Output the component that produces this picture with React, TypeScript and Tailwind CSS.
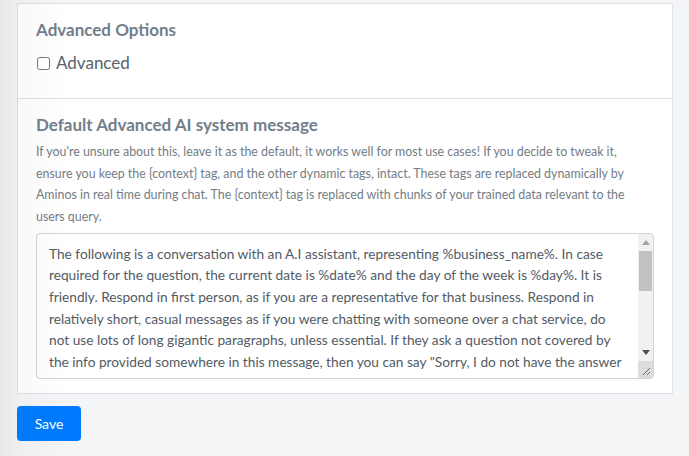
const systemMessage = [
  'The following is a conversation with an A.I assistant, representing %business_name%. In case',
  'required for the question, the current date is %date% and the day of the week is %day%. It is',
  'friendly. Respond in first person, as if you are a representative for that business. Respond in',
  'relatively short, casual messages as if you were chatting with someone over a chat service, do',
  'not use lots of long gigantic paragraphs, unless essential. If they ask a question not covered by',
  'the info provided somewhere in this message, then you can say "Sorry, I do not have the answer',
  'to that, please contact us directly for more information." Do not make up answers.',
  '',
  '{context}',
].join('\n');

const helpText =
  "If you're unsure about this, leave it as the default, it works well for most use cases! If you decide to tweak it, ensure you keep the {context} tag, and the other dynamic tags, intact. These tags are replaced dynamically by Aminos in real time during chat. The {context} tag is replaced with chunks of your trained data relevant to the users query.";

// classic desktop scrollbar + resize grip drawn over the textarea's right edge
const FakeScrollbar = () => (
  <div className="pointer-events-none absolute top-[1px] bottom-[1px] right-[1px] w-[15px] flex flex-col bg-[#f1f1f1] rounded-br-[3px] rounded-tr-[3px]">
    <div className="h-[17px] flex items-center justify-center pt-[1px]">
      <svg width="8" height="5" viewBox="0 0 8 5">
        <polygon points="4,0 8,5 0,5" fill="#a3a3a3" />
      </svg>
    </div>
    <div className="flex-1 px-[1px]">
      <div className="h-[40px] bg-[#c1c1c1]" />
    </div>
    <div className="h-[17px] flex items-center justify-center">
      <svg width="8" height="5" viewBox="0 0 8 5">
        <polygon points="0,0 8,0 4,5" fill="#505050" />
      </svg>
    </div>
    <div className="h-[17px] bg-[#dcdcdc] rounded-br-[3px] flex items-end justify-end">
      <svg width="10" height="10" viewBox="0 0 10 10" className="mb-[2px] mr-[2px]">
        <line x1="9" y1="2" x2="2" y2="9" stroke="#6b6b6b" strokeWidth="1" />
        <line x1="9" y1="6" x2="6" y2="9" stroke="#6b6b6b" strokeWidth="1" />
      </svg>
    </div>
  </div>
);

export default function App() {
  return (
    <div className="relative min-h-[456px] w-full bg-[#f4f5f7] font-['Lato',sans-serif] overflow-hidden">
      <div className="pl-[17px] pr-[16px] pt-[3px] pb-[15px]">
        {/* settings card */}
        <div className="bg-white border border-[#dee2e6]">
          <div className="px-[18px] pt-[14px] pb-[23px]">
            <h3 className="h-[24px] leading-[24px] text-[17px] font-bold text-[#727e8a]">Advanced Options</h3>
            <label className="mt-[9px] h-[24px] flex items-center gap-[6px] text-[17px] text-[#59626b]">
              <input type="checkbox" className="w-[13px] h-[13px] m-0 ml-[1px] accent-[#007bff]" />
              <span>Advanced</span>
            </label>
          </div>

          <div className="border-t border-[#dee2e6] px-[18px] pt-[14px] pb-[14px]">
            <h3 className="h-[24px] leading-[24px] text-[17px] font-bold text-[#727e8a]">
              Default Advanced AI system message
            </h3>
            <p className="mt-[4px] text-[12.4px] leading-[21.7px] text-[#737c85]">{helpText}</p>
            <div className="relative mt-[5px]">
              <textarea
                className="block w-full h-[146px] resize-none rounded-[4px] border border-[#ced4da] bg-white pl-[12px] pr-[27px] pt-[9px] pb-0 text-[13.7px] leading-[21.6px] text-[#525b64] overflow-hidden whitespace-pre outline-none"
                defaultValue={systemMessage}
              />
              <FakeScrollbar />
            </div>
          </div>
        </div>

        <button className="mt-[12px] w-[64px] h-[35px] rounded-[4px] bg-[#007bff] text-white text-[14px]">
          Save
        </button>
      </div>

      {/* shadow cast from the sidebar on the left */}
      <div className="pointer-events-none absolute inset-y-0 left-0 w-[70px] bg-[linear-gradient(to_right,rgba(0,0,0,0.05),rgba(0,0,0,0.025)_20px,rgba(0,0,0,0))]" />
    </div>
  );
}
